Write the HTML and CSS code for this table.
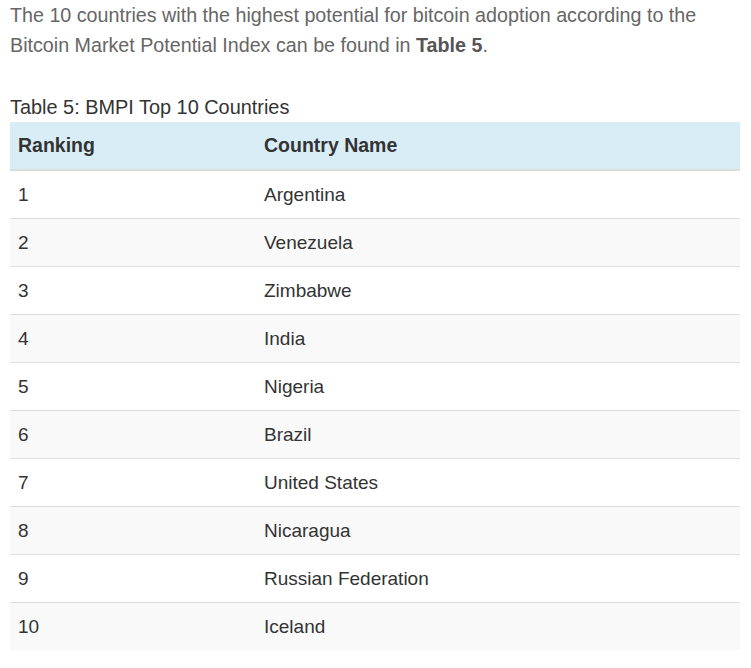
FILE: index.html
```html
<!DOCTYPE html>
<html>
<head>
<meta charset="utf-8">
<link rel="stylesheet" href="styles.css">
</head>
<body>
<div class="page">
  <p class="intro">The 10 countries with the highest potential for bitcoin adoption according to the Bitcoin Market Potential Index can be found in <strong>Table&nbsp;5</strong>.</p>
  <table class="data">
    <caption>Table 5: BMPI Top 10 Countries</caption>
    <thead>
      <tr><th class="rank">Ranking</th><th>Country Name</th></tr>
    </thead>
    <tbody>
      <tr><td>1</td><td>Argentina</td></tr>
      <tr><td>2</td><td>Venezuela</td></tr>
      <tr><td>3</td><td>Zimbabwe</td></tr>
      <tr><td>4</td><td>India</td></tr>
      <tr><td>5</td><td>Nigeria</td></tr>
      <tr><td>6</td><td>Brazil</td></tr>
      <tr><td>7</td><td>United States</td></tr>
      <tr><td>8</td><td>Nicaragua</td></tr>
      <tr><td>9</td><td>Russian Federation</td></tr>
      <tr><td>10</td><td>Iceland</td></tr>
    </tbody>
  </table>
</div>
</body>
</html>
```
FILE: styles.css
```css
html, body {
  margin: 0;
  padding: 0;
  background: #fff;
}
.page {
  padding: 0 11px 0 10px;
  font-family: "Liberation Sans", Arial, sans-serif;
  font-size: 20px;
  color: #333;
}
.intro {
  margin: 0 0 35px;
  font-size: 19.7px;
  line-height: 30px;
  color: #666;
}
.intro strong {
  color: #555;
}
.data {
  width: 100%;
  border-collapse: collapse;
  border-spacing: 0;
  font-size: 19px;
}
.data caption {
  text-align: left;
  font-size: 19.9px;
  line-height: 24px;
  padding: 0 0 3px;
  color: #333;
}
.data th, .data td {
  text-align: left;
  padding: 8px;
  line-height: 31px;
  vertical-align: top;
}
.data th {
  background: #d9edf7;
  font-weight: bold;
  font-size: 19.5px;
  color: #333;
  border-bottom: 2px solid #ddd;
}
.data th.rank {
  width: 230px;
}
.data td {
  border-top: 1px solid #ddd;
  color: #333;
}
.data tbody tr:nth-child(even) td {
  background: #f9f9f9;
}
```
